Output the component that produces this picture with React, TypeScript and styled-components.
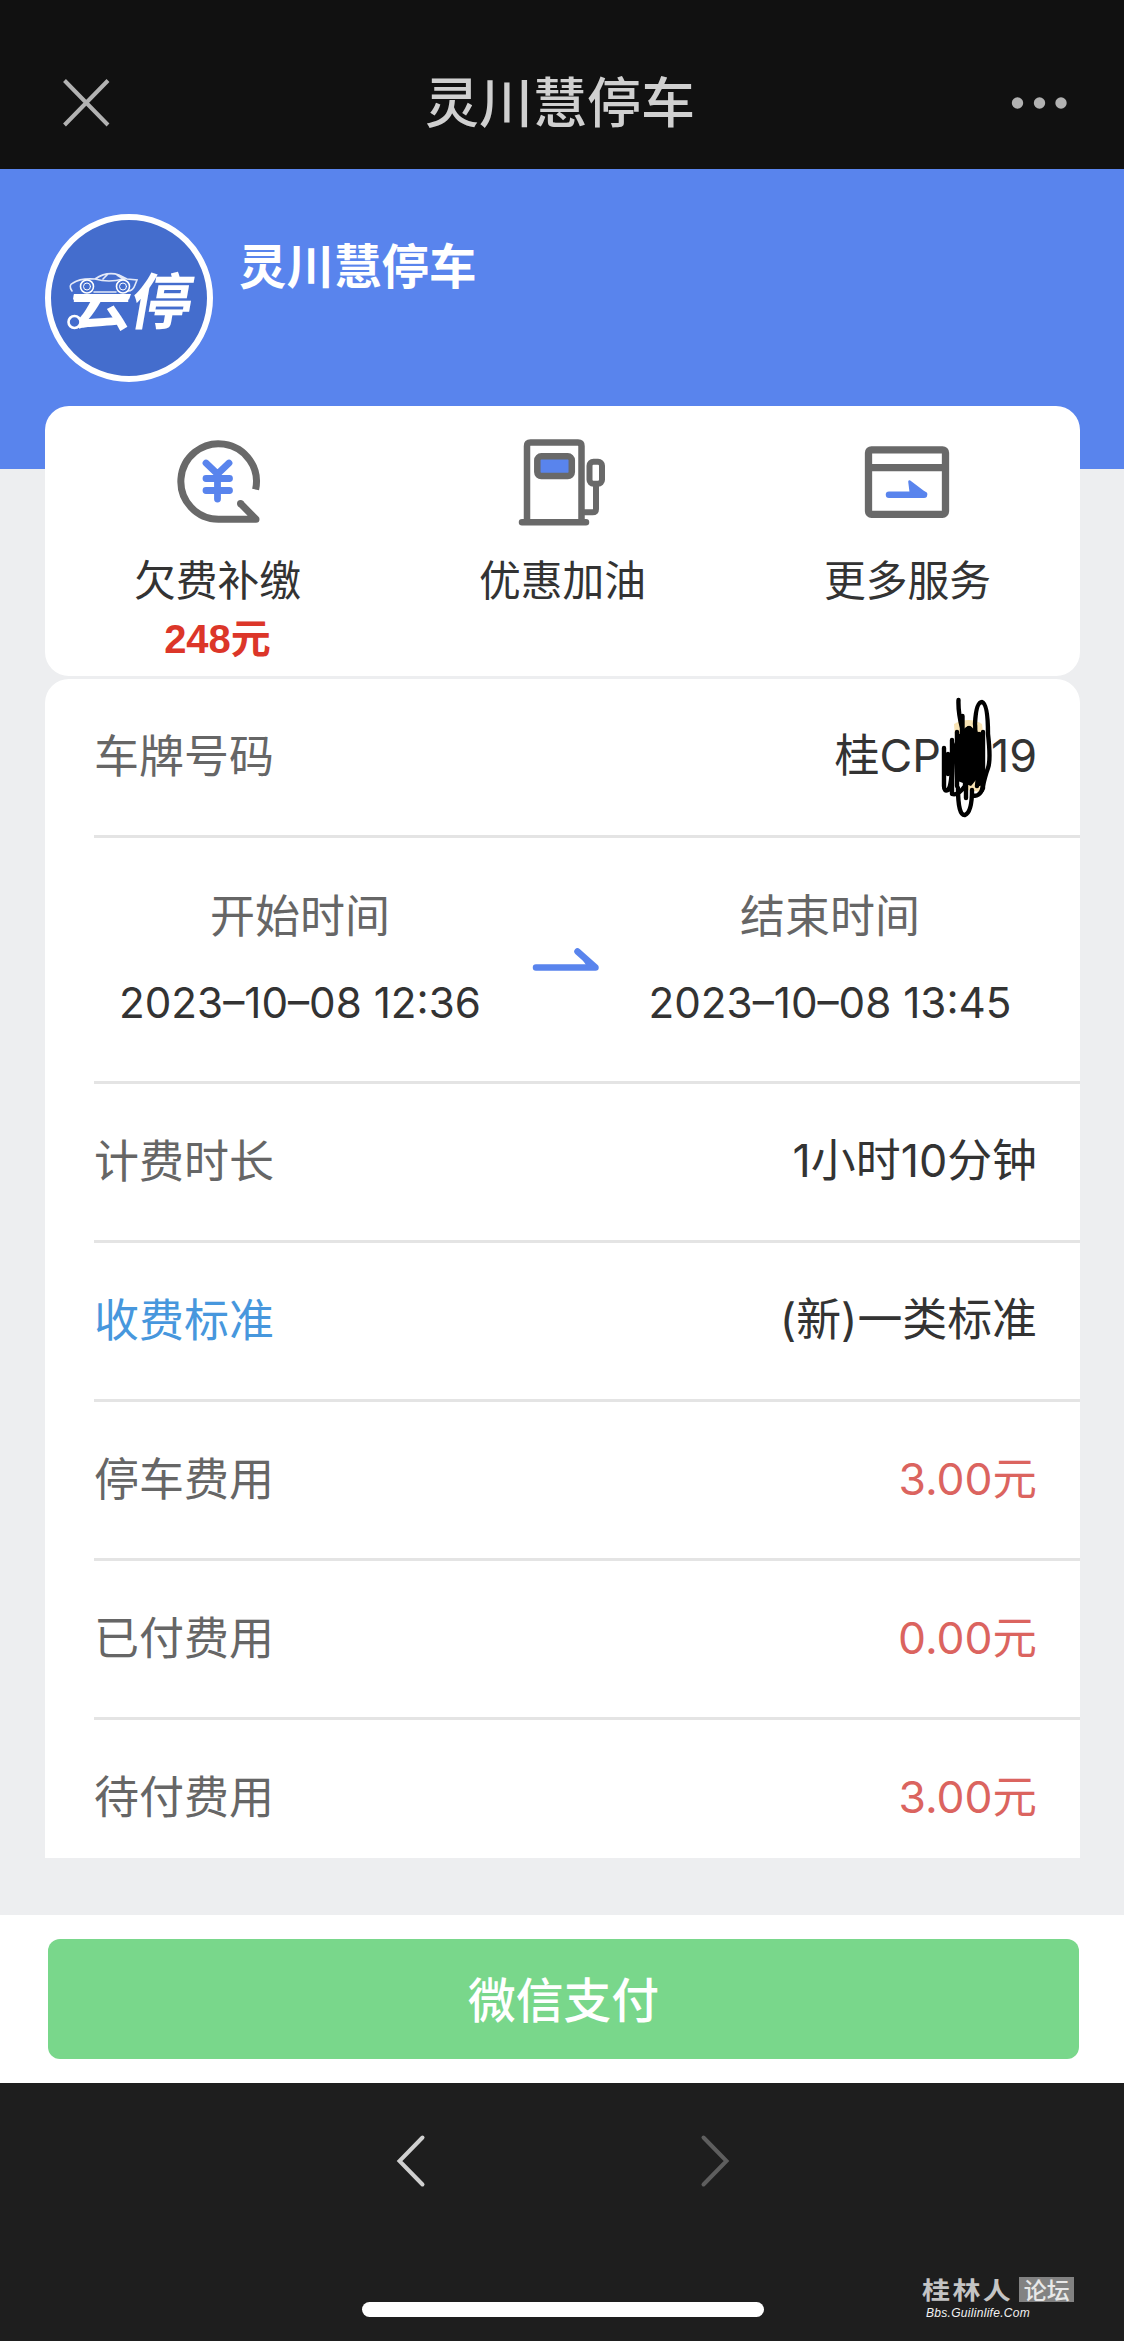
import React from "react";
import styled, { createGlobalStyle, css } from "styled-components";

const CJK = `"Noto Sans CJK SC", "Noto Sans", sans-serif`;
const BLUE = "#5984ed";
const GRAY = "#696969";

const GlobalStyle = createGlobalStyle`
  * { box-sizing: border-box; }
  html, body { margin: 0; padding: 0; }
  body { background: #1e1e1e; font-family: Inter, ${CJK}; }
`;

const Screen = styled.div`
  width: 1124px;
  height: 2341px;
  display: flex;
  flex-direction: column;
  overflow: hidden;
  position: relative;
  background: #1e1e1e;
`;

const TitleBar = styled.header`
  height: 169px;
  padding: 36px 56px 0 56px;
  background: #111111;
  display: grid;
  grid-template-columns: 120px 1fr 120px;
  align-items: center;
`;

const BarTitle = styled.h1`
  margin: -5px 4px 0 0;
  font: 500 54px/80px ${CJK};
  color: #d0d0d0;
  text-align: center;
  white-space: nowrap;
`;

const BarButton = styled.button<{ $end?: boolean }>`
  border: 0;
  padding: 0;
  background: none;
  display: flex;
  justify-content: ${(p) => (p.$end ? "flex-end" : "flex-start")};
`;

const Page = styled.main`
  height: 1746px;
  background: #edeef0;
`;

const Hero = styled.section`
  height: 300px;
  padding: 45px 45px 0;
  background: ${BLUE};
  display: flex;
  align-items: flex-start;
  gap: 26px;
`;

const Avatar = styled.div`
  width: 168px;
  height: 168px;
  border: 6px solid #fff;
  border-radius: 50%;
  background: #446dcd;
  overflow: hidden;
`;

const HeroName = styled.h2`
  margin: 15px 0 0;
  font: 700 47.5px/70px ${CJK};
  color: #fff;
`;

const Card = styled.section`
  width: 1035px;
  margin: 0 auto 0 45px;
  background: #fff;
`;

const Services = styled(Card)`
  height: 270px;
  margin-top: -63px;
  border-radius: 24px;
  display: grid;
  grid-template-columns: repeat(3, 1fr);
`;

const Service = styled.div`
  padding-top: 30px;
  display: flex;
  flex-direction: column;
  align-items: center;
`;

const ServiceLabel = styled.span`
  margin-top: 22px;
  font: 400 41.8px/60px ${CJK};
  color: #333;
`;

const ServiceNote = styled.span`
  margin-top: 4px;
  font: 700 40px/54px "Liberation Sans", ${CJK};
  color: #dc3629;
`;

const Details = styled(Card)`
  height: 1179px;
  margin-top: 3px;
  border-radius: 24px 24px 0 0;
  padding-left: 49px;
  overflow: hidden;
`;

const line = css`
  border-bottom: 3px solid #e4e4e4;
`;

const Row = styled.div`
  height: 159px;
  padding: 0 43px 3px 0;
  display: flex;
  align-items: center;
  justify-content: space-between;
  ${line}
  &:last-child { border-bottom-color: transparent; }
`;

const Label = styled.span<{ $link?: boolean }>`
  margin-bottom: 3px;
  font: 400 45px/66px ${CJK};
  color: ${(p) => (p.$link ? "#4797dd" : "#666")};
`;

const Value = styled.span<{ $tone?: "money"; $compact?: boolean }>`
  position: relative;
  font: 400 ${(p) => (p.$compact ? 42.2 : p.$tone === "money" ? 44.4 : 44.9)}px/66px Inter, ${CJK};
  color: ${(p) => (p.$tone === "money" ? "#db645f" : "#333")};
  white-space: nowrap;
`;

const TimeRow = styled.div`
  height: 246px;
  padding: 43px 44px 0 0;
  display: grid;
  grid-template-columns: 412px 1fr 412px;
  ${line}
`;

const TimeColumn = styled.div`
  display: flex;
  flex-direction: column;
  align-items: center;
  gap: 20px;
`;

const ArrowCell = styled.div`
  padding: 64px 0 0 2px;
  display: flex;
  justify-content: center;
`;

const Scribble = styled.svg`
  position: absolute;
  left: 104px;
  top: -29px;
`;

const PlateGap = styled.span`
  display: inline-block;
  width: 50px;
`;

const PayBar = styled.section`
  height: 168px;
  padding: 24px 45px 24px 48px;
  background: #fff;
`;

const PayButton = styled.button`
  width: 100%;
  height: 120px;
  padding: 0 0 3px;
  border: 0;
  border-radius: 12px;
  background: #79d78b;
  color: #fff;
  font: 500 47.8px/70px ${CJK};
`;

const BrowserBar = styled.footer`
  flex: 1;
  padding-left: 2px;
  display: flex;
  flex-direction: column;
  align-items: center;
`;

const NavButtons = styled.nav`
  margin-top: 50px;
  width: 338px;
  display: flex;
  justify-content: space-between;
`;

const HomeIndicator = styled.div`
  margin-top: 113px;
  width: 402px;
  height: 15px;
  border-radius: 8px;
  background: #fff;
`;

const Watermark = styled.div`
  position: absolute;
  left: 922px;
  top: 2276px;
  width: 154px;
`;

const WatermarkTop = styled.div`
  display: flex;
  align-items: center;
  gap: 6px;
  height: 27px;
`;

const WatermarkName = styled.span`
  font: 700 28px/27px ${CJK};
  letter-spacing: 2.4px;
  color: #c4c4c4;
  transform: scaleY(0.86);
`;

const WatermarkTag = styled.span`
  width: 55px;
  height: 25px;
  background: #828282;
  color: #e8e8e8;
  font: 500 23px/24px ${CJK};
  text-align: center;
  white-space: nowrap;
`;

const WatermarkUrl = styled.div`
  margin: 2px 0 0 4px;
  font: italic 400 12px/16px "Liberation Sans", sans-serif;
  letter-spacing: 0.3px;
  color: #f2f2f2;
  white-space: nowrap;
`;

const CloseIcon = () => (
  <svg width="60" height="60" viewBox="0 0 60 60" stroke="#b2b2b2" strokeWidth="4" fill="none">
    <path d="M8.500 7.500L52 52M52 7.500L8.500 52" />
  </svg>
);

const MoreIcon = () => (
  <svg width="58" height="14" viewBox="0 0 58 14" fill="#b2b2b2">
    <circle cx="7.500" cy="7" r="5.700" />
    <circle cx="29.500" cy="7" r="5.700" />
    <circle cx="51" cy="7" r="5.700" />
  </svg>
);

const AvatarLogo = () => (
  <svg width="156" height="156" viewBox="0 0 156 156">
    <defs>
      <clipPath id="below-car"><rect x="0" y="74" width="156" height="60" /></clipPath>
    </defs>
    <g fill="#fff" fontFamily={CJK}>
      <g clipPath="url(#below-car)">
        <text transform="translate(20 105)" fontSize="60" fontWeight="700">云</text>
      </g>
      <text transform="translate(77 104) skewX(-10)" fontSize="61" fontWeight="700">停</text>
    </g>
    <g fill="none" stroke="#fff" strokeLinecap="round">
      <circle cx="23.500" cy="102" r="6" strokeWidth="2.600" fill="#446dcd" />
      <path d="M21 71Q17 65 22 63Q29 58 44 59Q56 51 68 55L76 59L86 60L84 65Q82 71 77 71M43 72H65M44 59Q58 63 72 59M52 59L57 54M66 55L74 60" strokeWidth="1.600" opacity=".85" />
      <g fill="#446dcd">
        <circle cx="36" cy="66.500" r="6.500" strokeWidth="1.600" />
        <circle cx="72" cy="66.500" r="6.500" strokeWidth="1.600" />
      </g>
      <circle cx="36" cy="66.500" r="3.500" strokeWidth="1" />
      <circle cx="72" cy="66.500" r="3.500" strokeWidth="1" />
    </g>
    <path d="M23 74H80L78 79.500H22Z" fill="#fff" />
  </svg>
);

const ArrearsIcon = () => (
  <svg width="90" height="90" viewBox="0 0 90 90" fill="none" strokeLinejoin="round">
    <path d="M82.600 53.500A37.800 37.800 0 1 0 45.500 83.300H83L67.500 67.500" stroke={GRAY} strokeWidth="7" />
    <circle cx="67.500" cy="67.500" r="3.500" fill={GRAY} />
    <path d="M33 27L44.500 38L56 27M44.500 38V63M33 42.500H56.500M33 54.500H56.500" stroke={BLUE} strokeWidth="6.800" strokeLinecap="round" />
  </svg>
);

const FuelIcon = () => (
  <svg width="90" height="90" viewBox="1.500 0 90 90" fill="none" stroke={GRAY} strokeWidth="6.500" strokeLinecap="round">
    <path d="M10.500 86V10Q10.500 6.500 14 6.500H61.500Q65 6.500 65 10V86M5.500 86.300H69.500" />
    <rect x="20.800" y="20.300" width="34.500" height="19.800" rx="4" fill={BLUE} />
    <rect x="73" y="25.700" width="12.500" height="22" rx="4" strokeWidth="6" />
    <path d="M79.500 50V73Q79.500 76.300 76 76.300H66" strokeWidth="6" strokeLinecap="butt" />
  </svg>
);

const MoreServicesIcon = () => (
  <svg width="90" height="90" viewBox="0 0 90 90" fill="none" stroke={GRAY} strokeWidth="7.300">
    <rect x="5.500" y="13.800" width="77" height="64.500" rx="3" />
    <path d="M6 31.700H82" />
    <path d="M26 58.700H61" stroke={BLUE} strokeWidth="6.500" strokeLinecap="round" />
    <path d="M46.500 45.500L63 58L48 57.500Z" fill={BLUE} stroke={BLUE} strokeWidth="2.600" strokeLinejoin="round" />
  </svg>
);

const TimeArrow = () => (
  <svg width="68" height="30" viewBox="0 0 68 30" fill="none" stroke={BLUE} strokeWidth="6.500" strokeLinecap="round" strokeLinejoin="round">
    <path d="M4 22.500H63.500L45.500 6.500" />
    <path d="M54 20L48 11L60 21Z" fill={BLUE} stroke="none" />
  </svg>
);

const PlateScribble = () => (
  <Scribble width="60" height="126" viewBox="0 0 60 126" fill="none">
    <path d="M15 30Q30 22 43 30L44 38L42 98L28 96L16 44Z" fill="#f8e3b4" />
    <path d="M14 52L20 40L38 36L45 54L42 80L32 92L16 86Z" fill="#000" />
    <g stroke="#000" strokeWidth="4.400" strokeLinecap="round" strokeLinejoin="round">
      <path d="M19.500 6Q19 18 23 34V82M23.500 22V70" />
      <path d="M5 54V92Q5 98 9 96Q14 90 13 46V100Q19 102 26 92L27 38" />
      <path d="M18 38V92M25 38Q33 28 34 44V80Q37 34 36 30Q37 8 43 8Q49 10 49 40Q52 66 49 74Q46 82 43 96" />
      <path d="M19 94Q19 122 26 121Q33 118 33 96M27 104V62M33 101Q40 104 44 94V38L38 92M30 84V34M40 40V90M9 60V80" />
    </g>
  </Scribble>
);

const Chevron = ({ flip, color }: { flip?: boolean; color: string }) => (
  <svg width="34" height="56" viewBox="0 0 34 56" fill="none" stroke={color} strokeWidth="4" strokeLinecap="round">
    <path d={flip ? "M5.500 4.500L28.500 28L5.500 51.500" : "M28.500 4.500L5.500 28L28.500 51.500"} />
  </svg>
);

const services = [
  { label: "欠费补缴", note: "248元", icon: <ArrearsIcon /> },
  { label: "优惠加油", icon: <FuelIcon /> },
  { label: "更多服务", icon: <MoreServicesIcon /> },
];

const times = [
  { label: "开始时间", value: "2023–10–08 12:36" },
  { label: "结束时间", value: "2023–10–08 13:45" },
];

const rows: { label: string; value: string; link?: boolean; tone?: "money" }[] = [
  { label: "计费时长", value: "1小时10分钟" },
  { label: "收费标准", value: "(新)一类标准", link: true },
  { label: "停车费用", value: "3.00元", tone: "money" },
  { label: "已付费用", value: "0.00元", tone: "money" },
  { label: "待付费用", value: "3.00元", tone: "money" },
];

const TimeBlock = ({ label, value }: { label: string; value: string }) => (
  <TimeColumn>
    <Label>{label}</Label>
    <Value $compact>{value}</Value>
  </TimeColumn>
);

export default function App() {
  return (
    <>
      <GlobalStyle />
      <Screen>
        <TitleBar>
          <BarButton aria-label="关闭"><CloseIcon /></BarButton>
          <BarTitle>灵川慧停车</BarTitle>
          <BarButton $end aria-label="更多"><MoreIcon /></BarButton>
        </TitleBar>
        <Page>
          <Hero>
            <Avatar><AvatarLogo /></Avatar>
            <HeroName>灵川慧停车</HeroName>
          </Hero>
          <Services>
            {services.map((s) => (
              <Service key={s.label}>
                {s.icon}
                <ServiceLabel>{s.label}</ServiceLabel>
                {s.note && <ServiceNote>{s.note}</ServiceNote>}
              </Service>
            ))}
          </Services>
          <Details>
            <Row>
              <Label>车牌号码</Label>
              <Value>桂CP<PlateGap />19<PlateScribble /></Value>
            </Row>
            <TimeRow>
              <TimeBlock {...times[0]} />
              <ArrowCell><TimeArrow /></ArrowCell>
              <TimeBlock {...times[1]} />
            </TimeRow>
            {rows.map((r) => (
              <Row key={r.label}>
                <Label $link={r.link}>{r.label}</Label>
                <Value $tone={r.tone}>{r.value}</Value>
              </Row>
            ))}
          </Details>
        </Page>
        <PayBar><PayButton>微信支付</PayButton></PayBar>
        <BrowserBar>
          <NavButtons>
            <Chevron color="#d0d0d0" />
            <Chevron flip color="#5e5e5e" />
          </NavButtons>
          <HomeIndicator />
        </BrowserBar>
        <Watermark>
          <WatermarkTop>
            <WatermarkName>桂林人</WatermarkName>
            <WatermarkTag>论坛</WatermarkTag>
          </WatermarkTop>
          <WatermarkUrl>Bbs.Guilinlife.Com</WatermarkUrl>
        </Watermark>
      </Screen>
    </>
  );
}
